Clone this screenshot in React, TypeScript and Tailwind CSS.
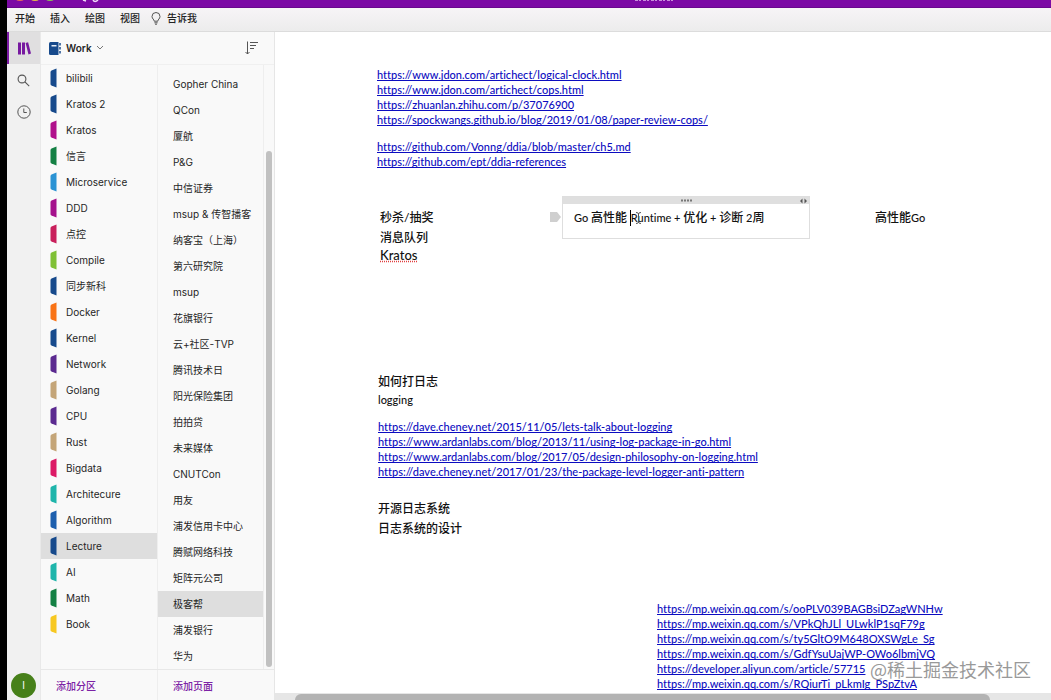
import type { ReactNode } from 'react';

const sections = [
  { name: 'bilibili', color: '#174a8c' },
  { name: 'Kratos 2', color: '#174a8c' },
  { name: 'Kratos', color: '#b0108c' },
  { name: '信言', color: '#148044' },
  { name: 'Microservice', color: '#2b93d4' },
  { name: 'DDD', color: '#a5128c' },
  { name: '点控', color: '#c9205c' },
  { name: 'Compile', color: '#7fc035' },
  { name: '同步新科', color: '#174a8c' },
  { name: 'Docker', color: '#f97316' },
  { name: 'Kernel', color: '#174a8c' },
  { name: 'Network', color: '#5b2a90' },
  { name: 'Golang', color: '#c4a578' },
  { name: 'CPU', color: '#5b2a90' },
  { name: 'Rust', color: '#c4a578' },
  { name: 'Bigdata', color: '#dc1a66' },
  { name: 'Architecure', color: '#1fb5ab' },
  { name: 'Algorithm', color: '#1d5fae' },
  { name: 'Lecture', color: '#174a8c' },
  { name: 'AI', color: '#1fb5ab' },
  { name: 'Math', color: '#148044' },
  { name: 'Book', color: '#f7c821' },
];

const pages = [
  'Gopher China', 'QCon', '厦航', 'P&G', '中信证券', 'msup & 传智播客', '纳客宝（上海）',
  '第六研究院', 'msup', '花旗银行', '云+社区-TVP', '腾讯技术日', '阳光保险集团', '拍拍贷',
  '未来媒体', 'CNUTCon', '用友', '浦发信用卡中心', '腾赋网络科技', '矩阵元公司', '极客帮',
  '浦发银行', '华为',
];

const clockLinks = [
  'https://www.jdon.com/artichect/logical-clock.html',
  'https://www.jdon.com/artichect/cops.html',
  'https://zhuanlan.zhihu.com/p/37076900',
  'https://spockwangs.github.io/blog/2019/01/08/paper-review-cops/',
];

const ddiaLinks = [
  'https://github.com/Vonng/ddia/blob/master/ch5.md',
  'https://github.com/ept/ddia-references',
];

const logLinks = [
  'https://dave.cheney.net/2015/11/05/lets-talk-about-logging',
  'https://www.ardanlabs.com/blog/2013/11/using-log-package-in-go.html',
  'https://www.ardanlabs.com/blog/2017/05/design-philosophy-on-logging.html',
  'https://dave.cheney.net/2017/01/23/the-package-level-logger-anti-pattern',
];

const articleLinks = [
  'https://mp.weixin.qq.com/s/ooPLV039BAGBsiDZagWNHw',
  'https://mp.weixin.qq.com/s/VPkQhJLl_ULwklP1sqF79g',
  'https://mp.weixin.qq.com/s/ty5GltO9M648OXSWgLe_Sg',
  'https://mp.weixin.qq.com/s/GdfYsuUajWP-OWo6lbmjVQ',
  'https://developer.aliyun.com/article/57715',
  'https://mp.weixin.qq.com/s/RQiurTi_pLkmIg_PSpZtvA',
];

function TitleBar() {
  return (
    <header className="h-2 shrink-0 bg-[#7c09a5] border-b border-[#6a078e] relative overflow-hidden">
      <svg className="absolute left-0 top-0" width="110" height="4" viewBox="0 0 110 4">
        <ellipse cx="13" cy="-1" rx="4" ry="2" fill="#e8695f" />
        <ellipse cx="28" cy="-1" rx="4" ry="2" fill="#e5b84a" />
        <ellipse cx="43" cy="-1" rx="4" ry="2" fill="#8bbf5a" />
        <path d="M76 0l3 1M86 0c1 2 3 2 5 0" stroke="#f1dcf7" strokeWidth="1.5" fill="none" />
      </svg>
      <svg className="absolute left-[60%] top-0" width="42" height="2" viewBox="0 0 42 2">
        <path d="M2 .5h38" stroke="#c98fdc" strokeWidth="1" strokeDasharray="3 1 2 2" />
      </svg>
    </header>
  );
}

function MenuBar() {
  return (
    <nav className="h-6 shrink-0 flex items-center gap-[15px] pl-2 pb-[2px] bg-gradient-to-b from-[#f7f4f7] to-[#ececec] border-b border-[#dcdcdc] text-[10px] font-medium text-[#222]">
      <button>开始</button>
      <button>插入</button>
      <button>绘图</button>
      <button>视图</button>
      <button className="flex items-center gap-[6px] -ml-1">
        <svg width="10" height="13" viewBox="0 0 10 13" fill="none" stroke="#555" strokeWidth="1">
          <path d="M3.2 9.2C3.2 7.4 1 6.8 1 4.5a4 4 0 0 1 8 0c0 2.3-2.2 2.9-2.2 4.7zM3.4 10.8h3.2M4 12.2h2" />
        </svg>
        告诉我
      </button>
    </nav>
  );
}

function Rail() {
  return (
    <aside className="w-[34px] shrink-0 flex flex-col items-center bg-[#f1f1f1] border-r border-[#e9e9e9]">
      <button aria-label="笔记本" className="w-full h-8 flex items-center justify-center bg-[#e0dfe0] border-l-2 border-[#7c1ba5]">
        <svg width="13" height="13" viewBox="0 0 13 13" fill="#7719a0">
          <path d="M0 .5h3v12H0zM4 .5h3v12H4zM7.600 1l2.500-.7L13 11.600l-2.500.9z" />
        </svg>
      </button>
      <button aria-label="搜索" className="w-full h-8 flex items-center justify-center">
        <svg width="13" height="13" viewBox="0 0 13 13" fill="none" stroke="#555" strokeWidth="1.1">
          <circle cx="5" cy="5" r="3.9" />
          <path d="M7.9 7.9l4.3 4.3" />
        </svg>
      </button>
      <button aria-label="最近" className="w-full h-8 flex items-center justify-center">
        <svg width="14" height="14" viewBox="0 0 14 14" fill="none" stroke="#555" strokeWidth="1">
          <circle cx="7" cy="7" r="6.2" />
          <path d="M6.8 3.5v4h3" />
        </svg>
      </button>
      <button className="mt-auto mb-[2px] size-[25px] rounded-full bg-[#47801a] text-white text-[10px]">I</button>
    </aside>
  );
}

function Sidebar() {
  return (
    <div className="w-[234px] shrink-0 flex flex-col bg-[#f9f9f9] border-r border-[#e6e6e6] text-[10px] text-[#262626]">
      <div className="h-[33px] shrink-0 flex items-center justify-between pl-2 pr-4 border-b border-[#f0f0f0]">
        <button className="flex items-center gap-1 text-[10px] font-semibold">
          <svg width="13" height="13" viewBox="0 0 13 13">
            <path d="M1.500 0H9.500V13H1.500Q0 13 0 11.500V1.500Q0 0 1.500 0z" fill="#174a8c" />
            <path d="M2.500 3h5v1.500h-5z" fill="#e8eef7" />
            <path d="M11 1v2.500M11 5v2.500M11 9v2.500" stroke="#174a8c" strokeWidth="1.5" />
          </svg>
          Work
          <svg width="8" height="6" viewBox="0 0 8 6" fill="none" stroke="#777">
            <path d="M1 1l3 3 3-3" />
          </svg>
        </button>
        <button aria-label="排序">
          <svg width="13" height="14" viewBox="0 0 13 14" fill="none" stroke="#555">
            <path d="M2.500 .5v12.500M.5 11l2 2 2-2M5 1.500h8M5 4.500h6M5 7.500h4" />
          </svg>
        </button>
      </div>

      <div className="flex-1 min-h-0 flex">
        <ul className="w-[117px] shrink-0 border-r border-[#eeeeee]">
          {sections.map((s) => (
            <li key={s.name}>
              <button className={`w-full h-[26px] flex items-center gap-2 pl-[9px] ${s.name === 'Lecture' ? 'bg-[#dedede]' : ''}`}>
                <svg width="8" height="20" viewBox="0 0 8 20">
                  <path d="M6.500 .5v19L1.500 17.500Q.5 17 .5 16V4Q.5 3 1.500 2.500z" fill={s.color} />
                </svg>
                {s.name}
              </button>
            </li>
          ))}
        </ul>
        <ul className="flex-1 pt-[6px] border-r border-[#eeeeee]">
          {pages.map((p) => (
            <li key={p}>
              <button className={`w-full h-[26px] pl-[15px] text-left whitespace-nowrap ${p === '极客帮' ? 'bg-[#dedede]' : ''}`}>
                {p}
              </button>
            </li>
          ))}
        </ul>
        <div className="w-[10px] flex flex-col items-center pb-[2px]">
          <div className="mt-auto w-[6px] h-[516px] rounded-full bg-[#c1c1c1]" />
        </div>
      </div>

      <div className="h-[31px] shrink-0 flex border-t border-[#e8e8e8] font-medium text-[#7c22a5]">
        <button className="w-[117px] pl-[15px] pt-[2px] text-left border-r border-[#eeeeee]">添加分区</button>
        <button className="pl-[15px] pt-[2px] text-left">添加页面</button>
      </div>
    </div>
  );
}

function LinkList({ links, className = '' }: { links: string[]; className?: string }) {
  return (
    <ul className={`text-[11px] ${className}`}>
      {links.map((l) => (
        <li key={l}>
          <a href={l} className="text-[#0c0cc0] underline [text-decoration-skip-ink:none]">{l}</a>
        </li>
      ))}
    </ul>
  );
}

// A note can sit anywhere on the page canvas
function Note({ className, children }: { className: string; children: ReactNode }) {
  return <div className={`absolute whitespace-nowrap leading-[15px] ${className}`}>{children}</div>;
}

function Canvas() {
  return (
    <main className="flex-1 min-w-0 relative overflow-hidden bg-white font-['Lato','Noto_Sans_CJK_SC',sans-serif] font-medium [font-variant-ligatures:none] text-[12px] text-[#111]">
      <Note className="left-[102px] top-[35px]">
        <LinkList links={clockLinks} />
        <LinkList links={ddiaLinks} className="mt-[12px]" />
      </Note>

      <Note className="left-[105px] top-[176px]">
        <p className="leading-[20px]">秒杀/抽奖</p>
        <p className="leading-[20px]">消息队列</p>
        <p className="text-[13px] underline decoration-dotted decoration-[#e04040]">Kratos</p>
      </Note>

      <Note className="left-[275px] top-[164px] flex">
        <svg className="mt-4 mr-px" width="11" height="10" viewBox="0 0 11 10">
          <path d="M0 0h7l4 5-4 5H0z" fill="#cfcfcf" />
        </svg>
        <div className="w-[248px] h-[43px] border border-[#dedede]">
          <div className="h-[7px] flex items-center justify-end bg-[#dfdfdf]">
            <svg className="mr-[105px]" width="14" height="3" viewBox="0 0 14 3" fill="#777">
              <path d="M1 .5h2v2H1zM4 .5h2v2H4zM7 .5h2v2H7zM10 .5h2v2h-2z" />
            </svg>
            <svg className="mr-px" width="9" height="6" viewBox="0 0 9 6" fill="#555">
              <path d="M3.500 .5v5L1 3zM5.500 .5v5L8 3z" />
            </svg>
          </div>
          <p className="pl-[11px] pt-1 text-[11px] leading-[20px] flex items-center">
            <span>Go <span className="text-[12px]">高性能</span>&nbsp;</span>
            <span className="w-px h-4 bg-black" />
            <span>
              Runtime + <span className="text-[12px]">优化</span> + <span className="text-[12px]">诊断</span> 2
              <span className="text-[12px]">周</span>
            </span>
          </p>
        </div>
        <svg className="absolute left-[85px] top-4" width="7" height="12" viewBox="0 0 7 12" fill="none" stroke="#555">
          <path d="M1 .5q2.500 0 2.500 1.500v8q0 1.500-2.500 1.500M6 .5q-2.500 0-2.500 1.500M6 11.500q-2.500 0-2.500-1.500" />
        </svg>
      </Note>

      <Note className="left-[600px] top-[176px]">
        <p className="text-[11px] leading-[20px]"><span className="text-[12px]">高性能</span>Go</p>
      </Note>

      <Note className="left-[103px] top-[340px]">
        <p className="leading-[20px]">如何打日志</p>
        <p className="text-[11px]">logging</p>
        <LinkList links={logLinks} className="mt-[12px]" />
        <p className="mt-[20px] leading-[20px]">开源日志系统</p>
        <p className="leading-[20px]">日志系统的设计</p>
      </Note>

      <Note className="left-[382px] top-[569px]">
        <LinkList links={articleLinks} />
      </Note>

      <div className="absolute inset-x-0 bottom-0 h-[7px] bg-[#e6e6e6] pl-5 pr-[61px]">
        <div className="mt-px h-[6px] rounded-t-md bg-[#b3b3b3]" />
      </div>

      <p className="absolute right-5 bottom-[19px] text-[18px] leading-[24px] font-normal text-[#999] font-['Noto_Sans_CJK_SC',sans-serif]">
        @稀土掘金技术社区
      </p>
    </main>
  );
}

export default function App() {
  return (
    <div className="h-screen flex flex-col border-l-[7px] border-black bg-white overflow-hidden font-['Inter','Noto_Sans_CJK_SC',sans-serif]">
      <TitleBar />
      <MenuBar />
      <div className="flex-1 min-h-0 flex">
        <Rail />
        <Sidebar />
        <Canvas />
      </div>
    </div>
  );
}
